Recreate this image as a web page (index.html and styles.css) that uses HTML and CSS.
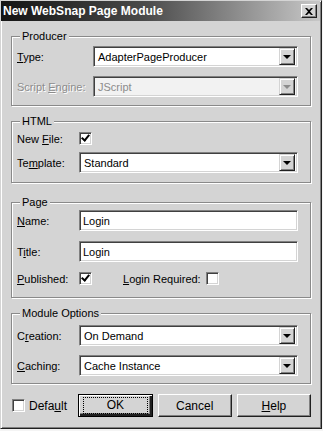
FILE: index.html
```html
<!DOCTYPE html>
<html lang="en">
<head>
    <meta charset="UTF-8">
    <meta name="viewport" content="width=device-width, initial-scale=1.0">
    <title>New WebSnap Page Module</title>
    <link rel="stylesheet" href="styles.css">
</head>
<body>
    <div class="dialog">
        <div class="titlebar">
            <span class="title">New WebSnap Page Module</span>
            <button class="close" title="Close">
                <svg width="8" height="7" viewBox="0 0 8 7"><path d="M0 0h2l2 2 2-2h2L5 3.5 8 7H6L4 5 2 7H0l3-3.5z" fill="#000"/></svg>
            </button>
        </div>

        <div class="content">
            <fieldset class="group producer">
                <legend>Producer</legend>
                <div class="row">
                    <label class="lbl wide"><u>T</u>ype:</label>
                    <div class="combo"><span class="val">AdapterPageProducer</span><span class="drop"><i class="arrow"></i></span></div>
                </div>
                <div class="row gap9">
                    <label class="lbl wide disabled">Script <u>E</u>ngine:</label>
                    <div class="combo off"><span class="val">JScript</span><span class="drop"><i class="arrow"></i></span></div>
                </div>
            </fieldset>

            <fieldset class="group html">
                <legend>HTML</legend>
                <div class="row check-row">
                    <label class="lbl">New <u>F</u>ile:</label>
                    <span class="check on"></span>
                </div>
                <div class="row gap7">
                    <label class="lbl">Te<u>m</u>plate:</label>
                    <div class="combo"><span class="val">Standard</span><span class="drop"><i class="arrow"></i></span></div>
                </div>
            </fieldset>

            <fieldset class="group page">
                <legend>Page</legend>
                <div class="row">
                    <label class="lbl"><u>N</u>ame:</label>
                    <div class="edit">Login</div>
                </div>
                <div class="row gap10">
                    <label class="lbl">T<u>i</u>tle:</label>
                    <div class="edit">Login</div>
                </div>
                <div class="row check-row gap10">
                    <label class="lbl"><u>P</u>ublished:</label>
                    <span class="check on"></span>
                    <label class="lbl-login"><u>L</u>ogin Required:</label>
                    <span class="check"></span>
                </div>
            </fieldset>

            <fieldset class="group module">
                <legend>Module Options</legend>
                <div class="row">
                    <label class="lbl">C<u>r</u>eation:</label>
                    <div class="combo"><span class="val">On Demand</span><span class="drop"><i class="arrow"></i></span></div>
                </div>
                <div class="row gap9">
                    <label class="lbl"><u>C</u>aching:</label>
                    <div class="combo"><span class="val">Cache Instance</span><span class="drop"><i class="arrow"></i></span></div>
                </div>
            </fieldset>

            <div class="footer">
                <div class="default-box">
                    <span class="check"></span>
                    <span>Defa<u>u</u>lt</span>
                </div>
                <button class="btn default"><span class="focus">OK</span></button>
                <button class="btn">Cancel</button>
                <button class="btn"><u>H</u>elp</button>
            </div>
        </div>
    </div>
</body>
</html>
```

FILE: styles.css
```css
body {
    margin: 0;
    padding: 0;
    background: #f4f4f4;
    font-family: "Liberation Sans", Arial, sans-serif;
    font-size: 11px;
    color: #000;
}

.dialog {
    width: 322px;
    height: 429px;
    box-sizing: border-box;
    background: #d4d4d4;
    border: 1px solid;
    border-color: #d4d4d4 #202020 #202020 #d4d4d4;
    box-shadow: inset 1px 1px 0 #fff, inset -1px -1px 0 #808080;
    display: flex;
    flex-direction: column;
}

.titlebar {
    height: 20px;
    margin: 0 1px 0 0;
    background: linear-gradient(to right, #141414, #4a4a4a 45%, #c8c8c8);
    display: flex;
    align-items: center;
    justify-content: space-between;
    padding: 0 3px 0 2px;
}

.title {
    color: #fff;
    font-weight: bold;
    font-size: 12px;
}

.close {
    width: 16px;
    height: 14px;
    padding: 0;
    margin: 0;
    background: #d4d4d4;
    border: 1px solid;
    border-color: #fff #202020 #202020 #fff;
    box-shadow: inset -1px -1px 0 #808080;
    display: flex;
    align-items: center;
    justify-content: center;
}

.content {
    padding: 8px 10px 0 10px;
    display: flex;
    flex-direction: column;
}

.group {
    margin: 0;
    padding: 0 12px 0 5px;
    border: 1px solid #8a8a8a;
    box-shadow: inset 1px 1px 0 #fff, 1px 1px 0 #fff;
}

.group legend {
    padding: 0 2px;
    margin-left: 3px;
    line-height: 14px;
    background: #d4d4d4;
}

.producer { padding-top: 3px; padding-bottom: 8px; }
.html { margin-top: 8px; padding-top: 4px; padding-bottom: 9px; }
.page { margin-top: 12px; padding-top: 1px; padding-bottom: 12px; }
.module { margin-top: 8px; padding-top: 5px; padding-bottom: 7px; }

.row {
    display: flex;
    align-items: center;
    height: 21px;
}

.check-row { height: 13px; }
.gap7 { margin-top: 7px; }
.gap9 { margin-top: 9px; }
.gap10 { margin-top: 10px; }

.lbl {
    width: 62px;
    flex: none;
    white-space: nowrap;
}

.lbl.wide { width: 76px; }

.disabled {
    color: #8c8c8c;
    text-shadow: 1px 1px 0 #fff;
}

.combo, .edit {
    flex: 1;
    height: 21px;
    box-sizing: border-box;
    background: #fff;
    border: 1px solid;
    border-color: #808080 #fff #fff #808080;
    box-shadow: inset 1px 1px 0 #404040, inset -1px -1px 0 #d4d4d4;
    display: flex;
    align-items: center;
    padding: 2px;
}

.val {
    flex: 1;
    padding-left: 2px;
    white-space: nowrap;
}

.edit { padding-left: 3px; }

.off { background: #f2f2f2; }
.off .val { color: #8c8c8c; }

.drop {
    width: 16px;
    height: 17px;
    box-sizing: border-box;
    background: #d4d4d4;
    border: 1px solid;
    border-color: #d4d4d4 #202020 #202020 #d4d4d4;
    box-shadow: inset 1px 1px 0 #fff, inset -1px -1px 0 #808080;
    display: flex;
    align-items: center;
    justify-content: center;
}

.arrow {
    width: 0;
    height: 0;
    border-left: 4px solid transparent;
    border-right: 4px solid transparent;
    border-top: 4px solid #000;
    margin-top: 1px;
}

.off .arrow { border-top-color: #8c8c8c; }

.check {
    width: 13px;
    height: 13px;
    box-sizing: border-box;
    flex: none;
    background: #fff;
    border: 1px solid;
    border-color: #808080 #fff #fff #808080;
    box-shadow: inset 1px 1px 0 #404040, inset -1px -1px 0 #d4d4d4;
    position: relative;
}

.check.on::after {
    content: "";
    position: absolute;
    left: 3px;
    top: 0;
    width: 3px;
    height: 6px;
    border: solid #000;
    border-width: 0 2px 2px 0;
    transform: rotate(40deg);
}

.lbl-login {
    margin-left: 31px;
    width: 83px;
    white-space: nowrap;
}

.footer {
    margin-top: 10px;
    display: flex;
    align-items: center;
    height: 23px;
    font-size: 12px;
}

.default-box {
    display: flex;
    align-items: center;
    gap: 4px;
    width: 67px;
    padding-left: 1px;
}

.btn {
    width: 75px;
    height: 23px;
    margin: 0 0 0 5px;
    padding: 0;
    font: inherit;
    color: #000;
    background: #d4d4d4;
    border: 1px solid;
    border-color: #fff #202020 #202020 #fff;
    box-shadow: inset -1px -1px 0 #808080;
}

.btn.default {
    margin-left: 0;
    border: 1px solid #000;
    box-shadow: inset 1px 1px 0 #fff, inset -2px -2px 0 #202020, inset -3px -3px 0 #808080;
    display: flex;
    align-items: center;
    justify-content: center;
}

.focus {
    display: block;
    width: 63px;
    height: 15px;
    line-height: 15px;
    border: 1px dotted #000;
}
```
